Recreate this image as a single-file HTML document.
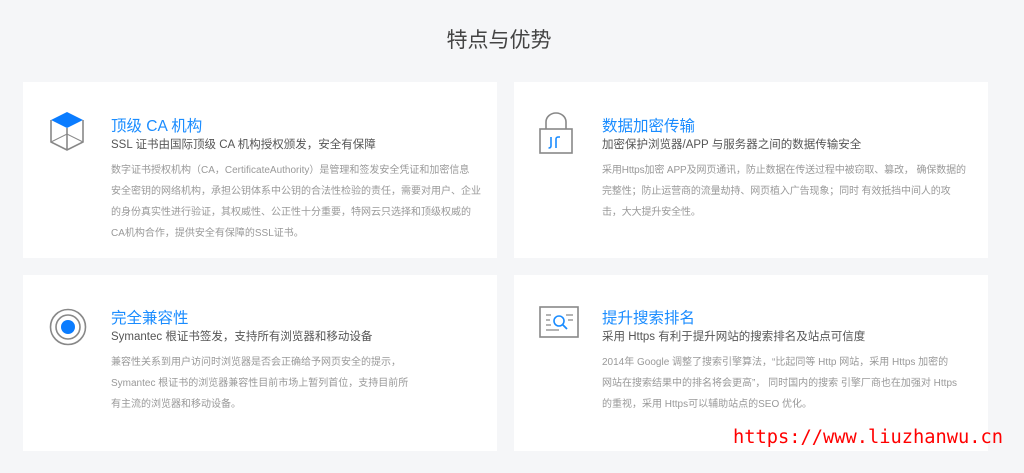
<!DOCTYPE html>
<html><head><meta charset="utf-8"><style>
*{margin:0;padding:0;box-sizing:border-box}
body{width:1024px;height:473px;background:#f5f6f8;font-family:"Liberation Sans","Noto Sans CJK SC",sans-serif;position:relative;overflow:hidden}
.h{position:absolute;left:0;width:998px;top:24px;text-align:center;font-size:21px;color:#444}
.card{position:absolute;background:#fff;width:474px;height:176px}
.ic{position:absolute;left:25px}
.t{position:absolute;left:88px;font-size:15.5px;color:#1a8cff;white-space:nowrap}
.s{position:absolute;left:88px;font-size:11.5px;color:#555;white-space:nowrap}
.d{position:absolute;left:88px;font-size:10px;color:#999;line-height:21px;white-space:nowrap}
.wm{position:absolute;left:733px;top:427px;font-size:18.7px;color:#f00;font-family:"DejaVu Sans Mono","Liberation Mono",monospace}
</style></head><body>
<div class="h">特点与优势</div>

<div class="card" style="left:23px;top:82px">
<svg class="ic" style="top:28px" width="40" height="42" viewBox="0 0 40 42"><path d="M3 10 L19 2 L35 10 L19 18 Z" fill="#0a7cff"/><g fill="none" stroke="#888" stroke-width="1.6"><path d="M3 10 V32 L19 40 L35 32 V10 M19 18 V40"/><path d="M3 32 L19 24 L35 32 M19 24 V18" stroke-width="1"/></g></svg>
<div class="t" style="top:32px">顶级 CA 机构</div>
<div class="s" style="top:54px">SSL 证书由国际顶级 CA 机构授权颁发，安全有保障</div>
<div class="d" style="top:78px">数字证书授权机构（CA，CertificateAuthority）是管理和签发安全凭证和加密信息<br>安全密钥的网络机构，承担公钥体系中公钥的合法性检验的责任，需要对用户、企业<br>的身份真实性进行验证，其权威性、公正性十分重要，特网云只选择和顶级权威的<br>CA机构合作，提供安全有保障的SSL证书。</div>
</div>

<div class="card" style="left:514px;top:82px">
<svg class="ic" style="top:30px" width="34" height="42" viewBox="0 0 34 42"><g fill="none" stroke="#888" stroke-width="1.6"><path d="M7 17 V10 A10 9 0 0 1 27 10 V17"/><rect x="1" y="17" width="32" height="24"/></g><path d="M12 25 V34 Q12 36 9.5 36 M17 36 V27 Q17 25 19.5 25 L21 25" fill="none" stroke="#1a8cff" stroke-width="1.6"/></svg>
<div class="t" style="top:32px">数据加密传输</div>
<div class="s" style="top:54px">加密保护浏览器/APP 与服务器之间的数据传输安全</div>
<div class="d" style="top:78px;letter-spacing:-0.12px">采用Https加密 APP及网页通讯，防止数据在传送过程中被窃取、篡改， 确保数据的<br>完整性；防止运营商的流量劫持、网页植入广告现象；同时 有效抵挡中间人的攻<br>击，大大提升安全性。</div>
</div>

<div class="card" style="left:23px;top:275px">
<svg class="ic" style="top:32px" width="40" height="40" viewBox="0 0 40 40"><circle cx="20" cy="20" r="17.5" fill="none" stroke="#888" stroke-width="1.6"/><circle cx="20" cy="20" r="12" fill="none" stroke="#888" stroke-width="1.6"/><circle cx="20" cy="20" r="7" fill="#0a7cff"/></svg>
<div class="t" style="top:31px">完全兼容性</div>
<div class="s" style="top:53px">Symantec 根证书签发，支持所有浏览器和移动设备</div>
<div class="d" style="top:77px">兼容性关系到用户访问时浏览器是否会正确给予网页安全的提示，<br>Symantec 根证书的浏览器兼容性目前市场上暂列首位，支持目前所<br>有主流的浏览器和移动设备。</div>
</div>

<div class="card" style="left:514px;top:275px">
<svg class="ic" style="top:31px" width="40" height="32" viewBox="0 0 40 32"><rect x="1" y="1" width="38" height="30" fill="none" stroke="#888" stroke-width="1.6"/><g stroke="#888" stroke-width="1.2"><path d="M7 9 H12 M7 14 H11 M7 19 H12 M7 24 H20 M27 9 H34 M29 14 H34"/></g><circle cx="20" cy="15" r="5" fill="none" stroke="#1a8cff" stroke-width="1.6"/><path d="M24 19 L28 23" stroke="#1a8cff" stroke-width="1.8"/></svg>
<div class="t" style="top:31px">提升搜索排名</div>
<div class="s" style="top:53px">采用 Https 有利于提升网站的搜索排名及站点可信度</div>
<div class="d" style="top:77px">2014年 Google 调整了搜索引擎算法，“比起同等 Http 网站，采用 Https 加密的<br>网站在搜索结果中的排名将会更高”， 同时国内的搜索 引擎厂商也在加强对 Https<br>的重视，采用 Https可以辅助站点的SEO 优化。</div>
</div>

<div class="wm">https://www.liuzhanwu.cn</div>
</body></html>
